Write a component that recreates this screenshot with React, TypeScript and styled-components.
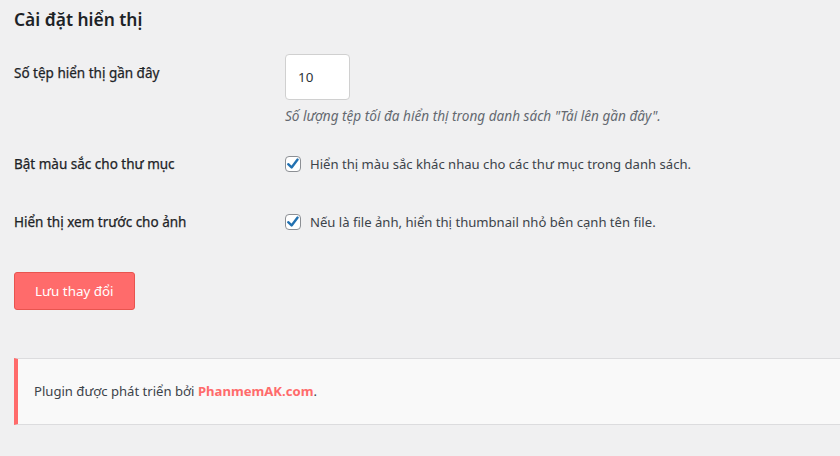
import styled, { createGlobalStyle } from "styled-components";

const GlobalStyle = createGlobalStyle`
    body {
        margin: 0;
        background: #f0f0f1;
        font-family: "Noto Sans", "Open Sans", sans-serif;
        font-size: 13.1px;
        color: #3c434a;
        overflow: hidden;
    }
`;

const Wrap = styled.div`
    padding-left: 14px;
`;

const Title = styled.h2`
    margin: 7px 0 0;
    font-size: 17.4px;
    line-height: 24px;
    font-weight: 600;
    color: #1d2327;
`;

const Row = styled.div<{ $top: number }>`
    display: grid;
    grid-template-columns: 271px 1fr;
    padding-top: ${(props) => props.$top}px;
`;

const Label = styled.div<{ $offset?: number }>`
    margin-top: ${(props) => props.$offset || 0}px;
    line-height: 20px;
    font-size: 13.5px;
    font-weight: 400;
    color: #1d2327;
    -webkit-text-stroke: 0.25px #1d2327;
`;

const Field = styled.div`
    display: flex;
    flex-direction: column;
    align-items: flex-start;
`;

const NumberInput = styled.input`
    box-sizing: border-box;
    width: 65px;
    height: 46px;
    padding: 0 12px;
    border: 1px solid #d0d0d0;
    border-radius: 4px;
    background: #fff;
    font-family: inherit;
    font-size: 13.4px;
    color: #2c3338;
    outline: none;
`;

const Description = styled.p`
    margin: 6px 0 0;
    line-height: 20px;
    font-size: 13.6px;
    font-style: italic;
    color: #646970;
`;

const CheckLine = styled.label`
    display: flex;
    align-items: center;
    gap: 9px;
    line-height: 20px;
    color: #3c434a;
`;

const CheckBox = styled.span`
    box-sizing: border-box;
    width: 16px;
    height: 16px;
    border: 1px solid #8c8f94;
    border-radius: 4px;
    background: #fff;
    display: flex;
    align-items: center;
    justify-content: center;
`;

const SaveButton = styled.button`
    margin-top: 40px;
    height: 38px;
    padding: 0 20px;
    border: 1px solid #e8544f;
    border-radius: 3px;
    background: #ff6b6b;
    color: #fff;
    font-family: inherit;
    font-size: 13.4px;
    cursor: pointer;
`;

const Notice = styled.div`
    margin-top: 48px;
    margin-right: -4px;
    padding: 22px 20px 23px 16px;
    background: #f9f9f9;
    border: 1px solid #dcdcde;
    border-left: 4px solid #ff6b6b;
    line-height: 20px;
    color: #3c434a;
`;

const BrandLink = styled.a`
    color: #ff6b6b;
    font-weight: 700;
    text-decoration: none;
`;

function Check() {
    return (
        <CheckBox>
            <svg width="16" height="16" viewBox="0 0 16 16" style={{ overflow: "visible" }}>
                <path d="M3.2 8.2 L6.6 11.4 L12.6 3.6" fill="none" stroke="#2271b1" strokeWidth="2.4" strokeLinecap="round" strokeLinejoin="round" />
            </svg>
        </CheckBox>
    );
}

function App() {
    return (
        <Wrap>
            <GlobalStyle />
            <Title>Cài đặt hiển thị</Title>
            <Row $top={23}>
                <Label $offset={9}>Số tệp hiển thị gần đây</Label>
                <Field>
                    <NumberInput type="text" defaultValue="10" />
                    <Description>Số lượng tệp tối đa hiển thị trong danh sách "Tải lên gần đây".</Description>
                </Field>
            </Row>
            <Row $top={28}>
                <Label>Bật màu sắc cho thư mục</Label>
                <CheckLine>
                    <Check />
                    Hiển thị màu sắc khác nhau cho các thư mục trong danh sách.
                </CheckLine>
            </Row>
            <Row $top={38}>
                <Label>Hiển thị xem trước cho ảnh</Label>
                <CheckLine>
                    <Check />
                    Nếu là file ảnh, hiển thị thumbnail nhỏ bên cạnh tên file.
                </CheckLine>
            </Row>
            <SaveButton>Lưu thay đổi</SaveButton>
            <Notice>
                Plugin được phát triển bởi <BrandLink href="#">PhanmemAK.com</BrandLink>.
            </Notice>
        </Wrap>
    );
}

export default App;
